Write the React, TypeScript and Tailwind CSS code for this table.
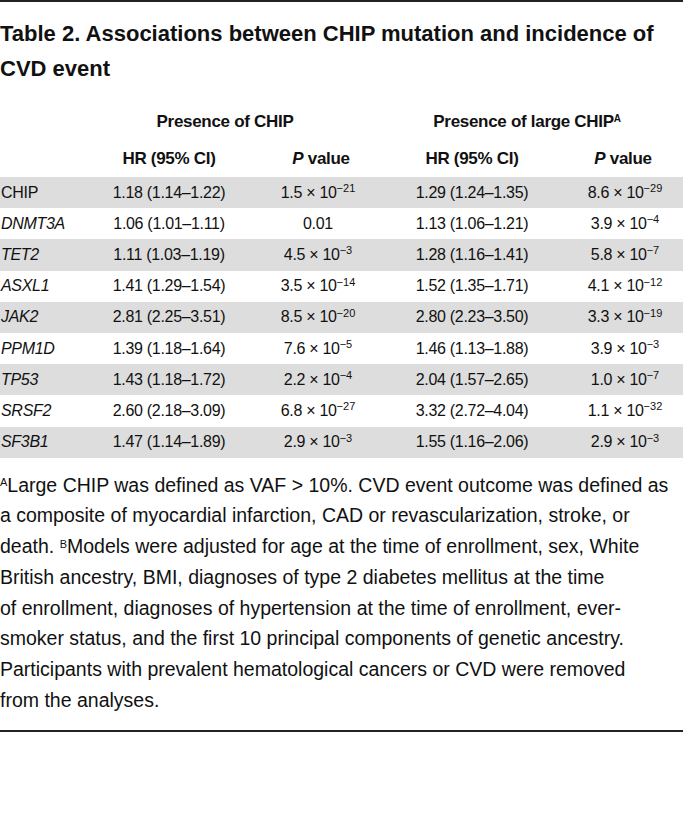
import React from "react";

type PVal = string | [string, string];
type Row = [string, boolean, string, PVal, string, PVal];

const rows: Row[] = [
  ["CHIP", false, "1.18 (1.14–1.22)", ["1.5", "−21"], "1.29 (1.24–1.35)", ["8.6", "−29"]],
  ["DNMT3A", true, "1.06 (1.01–1.11)", "0.01", "1.13 (1.06–1.21)", ["3.9", "−4"]],
  ["TET2", true, "1.11 (1.03–1.19)", ["4.5", "−3"], "1.28 (1.16–1.41)", ["5.8", "−7"]],
  ["ASXL1", true, "1.41 (1.29–1.54)", ["3.5", "−14"], "1.52 (1.35–1.71)", ["4.1", "−12"]],
  ["JAK2", true, "2.81 (2.25–3.51)", ["8.5", "−20"], "2.80 (2.23–3.50)", ["3.3", "−19"]],
  ["PPM1D", true, "1.39 (1.18–1.64)", ["7.6", "−5"], "1.46 (1.13–1.88)", ["3.9", "−3"]],
  ["TP53", true, "1.43 (1.18–1.72)", ["2.2", "−4"], "2.04 (1.57–2.65)", ["1.0", "−7"]],
  ["SRSF2", true, "2.60 (2.18–3.09)", ["6.8", "−27"], "3.32 (2.72–4.04)", ["1.1", "−32"]],
  ["SF3B1", true, "1.47 (1.14–1.89)", ["2.9", "−3"], "1.55 (1.16–2.06)", ["2.9", "−3"]],
];

const cell = "flex items-center justify-center whitespace-nowrap";

function PValue({ v }: { v: PVal }) {
  if (typeof v === "string") return <span>{v}</span>;
  return (
    <span>
      {v[0]} × 10<sup className="text-[11px] tracking-normal">{v[1]}</sup>
    </span>
  );
}

function App() {
  return (
    <div className="w-[683px] min-h-[828px] bg-white text-[#111] font-['Liberation_Sans',Arial,sans-serif]">
      <div className="border-t-2 border-b-2 border-[#222] pt-[14px] pb-[15px]">
        <h2 className="text-[22px] font-bold leading-[35px]">
          Table 2. Associations between CHIP mutation and incidence of CVD event
        </h2>

        <div className="mt-[18px]">
          <div className="grid grid-cols-[110px_118px_180px_159px_116px] h-[36px] text-[17px] font-bold tracking-[-0.3px]">
            <div />
            <div className={`${cell} col-span-2 pr-[68px]`}>Presence of CHIP</div>
            <div className={`${cell} col-span-2 pr-[37px]`}>
              <span>
                Presence of large CHIP<sup className="text-[10px]">A</sup>
              </span>
            </div>
          </div>
          <div className="grid grid-cols-[110px_118px_180px_159px_116px] h-[37px] text-[17px] font-bold tracking-[-0.3px]">
            <div />
            <div className={cell}>HR (95% CI)</div>
            <div className={`${cell} pl-[6px]`}>
              <span>
                <i>P</i> value
              </span>
            </div>
            <div className={`${cell} pr-[31px]`}>HR (95% CI)</div>
            <div className={`${cell} pr-[4px]`}>
              <span>
                <i>P</i> value
              </span>
            </div>
          </div>

          {rows.map((r, i) => (
            <div
              key={r[0]}
              className={`grid grid-cols-[110px_118px_180px_159px_116px] h-[31.2px] text-[16px] tracking-[-0.3px] ${
                i % 2 === 0 ? "bg-[#dddddd]" : "bg-white"
              }`}
            >
              <div className={`flex items-center pl-[1px] ${r[1] ? "italic" : ""}`}>{r[0]}</div>
              <div className={cell}>{r[2]}</div>
              <div className={cell}>
                <PValue v={r[3]} />
              </div>
              <div className={`${cell} pr-[31px]`}>{r[4]}</div>
              <div className={cell}>
                <PValue v={r[5]} />
              </div>
            </div>
          ))}
        </div>

        <p className="mt-[12px] text-[19.5px] leading-[30.7px] whitespace-nowrap">
          <sup className="text-[11px] leading-none">A</sup>Large CHIP was defined as VAF &gt; 10%. CVD
          event outcome was defined as
          <br />
          a composite of myocardial infarction, CAD or revascularization, stroke, or
          <br />
          death. <sup className="text-[11px] leading-none">B</sup>Models were adjusted for age at the
          time of enrollment, sex, White
          <br />
          British ancestry, BMI, diagnoses of type 2 diabetes mellitus at the time
          <br />
          of enrollment, diagnoses of hypertension at the time of enrollment, ever-
          <br />
          smoker status, and the first 10 principal components of genetic ancestry.
          <br />
          Participants with prevalent hematological cancers or CVD were removed
          <br />
          from the analyses.
        </p>
      </div>
    </div>
  );
}

export default App;
